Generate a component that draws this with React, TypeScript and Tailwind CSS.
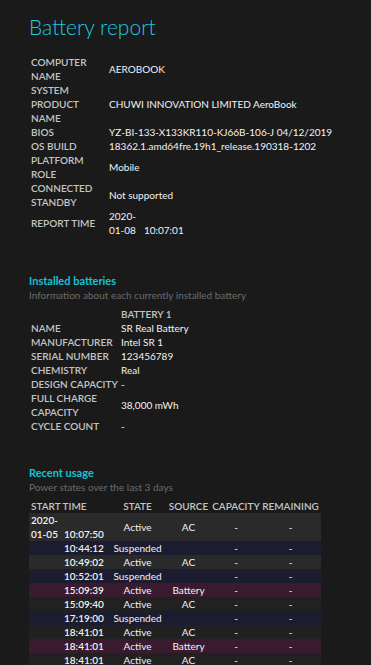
const font = { fontFamily: 'Lato, "Noto Sans", sans-serif' };

type Row = {
  date?: [string, string];
  time: string;
  state: string;
  source: string;
  kind: 'ac1' | 'ac2' | 'sus' | 'bat';
};

const usage: Row[] = [
  { date: ['2020-', '01-05'], time: '10:07:50', state: 'Active', source: 'AC', kind: 'ac1' },
  { time: '10:44:12', state: 'Suspended', source: '', kind: 'sus' },
  { time: '10:49:02', state: 'Active', source: 'AC', kind: 'ac1' },
  { time: '10:52:01', state: 'Suspended', source: '', kind: 'sus' },
  { time: '15:09:39', state: 'Active', source: 'Battery', kind: 'bat' },
  { time: '15:09:40', state: 'Active', source: 'AC', kind: 'ac2' },
  { time: '17:19:00', state: 'Suspended', source: '', kind: 'sus' },
  { time: '18:41:01', state: 'Active', source: 'AC', kind: 'ac2' },
  { time: '18:41:01', state: 'Active', source: 'Battery', kind: 'bat' },
  { time: '18:41:01', state: 'Active', source: 'AC', kind: 'ac2' },
];

const rowBg: Record<Row['kind'], string> = {
  ac1: 'bg-[#2a2a2a]',
  ac2: 'bg-[#212121]',
  sus: 'bg-[#1c1c30]',
  bat: 'bg-[#3a1a2e]',
};

function Label({ lines }: { lines: string[] }) {
  return (
    <div className="self-center font-semibold text-[#c4c4c4]">
      {lines.map((l) => (
        <div key={l}>{l}</div>
      ))}
    </div>
  );
}

function Value({ children }: { children: React.ReactNode }) {
  return <div className="self-center text-[#f2f2f2]">{children}</div>;
}

function SectionHead({ title, sub }: { title: string; sub: string }) {
  return (
    <div className="pl-[29px]">
      <div className="text-[11px] font-bold leading-[14px] text-[#17c2d4]">{title}</div>
      <div className="text-[10px] leading-[14px] text-[#6b6b6b]">{sub}</div>
    </div>
  );
}

export default function App() {
  return (
    <div className="h-[665px] overflow-hidden bg-[#1a1a1a]" style={font}>
      <h1 className="pl-[29px] pt-[12px] text-[21px] font-light leading-[30px] text-[#1ec8e4]">
        Battery report
      </h1>

      {/* system info */}
      <div className="mt-[13px] grid grid-cols-[78px_1fr] pl-[31px] text-[10px] leading-[14px]">
        <Label lines={['COMPUTER', 'NAME']} />
        <Value>AEROBOOK</Value>
        <Label lines={['SYSTEM', 'PRODUCT', 'NAME']} />
        <Value>CHUWI INNOVATION LIMITED AeroBook</Value>
        <Label lines={['BIOS']} />
        <Value>YZ-BI-133-X133KR110-KJ66B-106-J 04/12/2019</Value>
        <Label lines={['OS BUILD']} />
        <Value>18362.1.amd64fre.19h1_release.190318-1202</Value>
        <Label lines={['PLATFORM', 'ROLE']} />
        <Value>Mobile</Value>
        <Label lines={['CONNECTED', 'STANDBY']} />
        <Value>Not supported</Value>
        <Label lines={['REPORT TIME']} />
        <Value>
          <div>2020-</div>
          <div>
            01-08<span className="ml-[8px]">10:07:01</span>
          </div>
        </Value>
      </div>

      <div className="mt-[37px]">
        <SectionHead title="Installed batteries" sub="Information about each currently installed battery" />
      </div>

      {/* battery info */}
      <div className="mt-[5px] grid grid-cols-[90px_1fr] pl-[31px] text-[10px] leading-[14px]">
        <div />
        <div className="font-semibold text-[#c4c4c4]">BATTERY 1</div>
        <Label lines={['NAME']} />
        <Value>SR Real Battery</Value>
        <Label lines={['MANUFACTURER']} />
        <Value>Intel SR 1</Value>
        <Label lines={['SERIAL NUMBER']} />
        <Value>123456789</Value>
        <Label lines={['CHEMISTRY']} />
        <Value>Real</Value>
        <Label lines={['DESIGN CAPACITY']} />
        <Value>-</Value>
        <Label lines={['FULL CHARGE', 'CAPACITY']} />
        <Value>38,000 mWh</Value>
        <Label lines={['CYCLE COUNT']} />
        <Value>-</Value>
      </div>

      <div className="mt-[33px]">
        <SectionHead title="Recent usage" sub="Power states over the last 3 days" />
      </div>

      {/* usage table */}
      <div className="ml-[29px] mt-[5px] w-[292px] text-[10px] leading-[14px]">
        <div className="grid grid-cols-[81px_55px_47px_48px_61px] font-semibold text-[#c4c4c4]">
          <div className="pl-[2px]">START TIME</div>
          <div className="text-center">STATE</div>
          <div className="text-center">SOURCE</div>
          <div className="text-center">CAPACITY</div>
          <div className="text-center">REMAINING</div>
        </div>
        {usage.map((r, i) => (
          <div
            key={i}
            className={`grid grid-cols-[81px_55px_47px_48px_61px] items-center text-[#f2f2f2] ${rowBg[r.kind]}`}
          >
            <div className="flex items-end pl-[2px]">
              <div className="w-[33px] font-semibold">
                {r.date && (
                  <>
                    <div>{r.date[0]}</div>
                    <div>{r.date[1]}</div>
                  </>
                )}
              </div>
              <div className="font-semibold">{r.time}</div>
            </div>
            <div className="text-center">{r.state}</div>
            <div className="text-center">{r.source}</div>
            <div className="text-center">-</div>
            <div className="text-center">-</div>
          </div>
        ))}
      </div>
    </div>
  );
}
